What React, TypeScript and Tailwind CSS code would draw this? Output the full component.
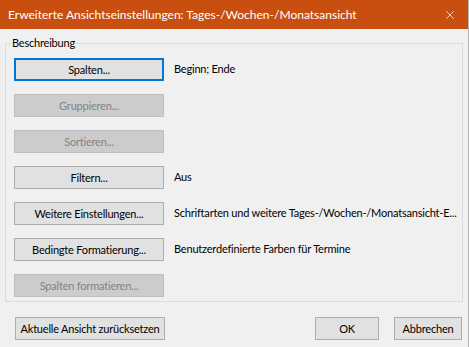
import { X } from "lucide-react";

type Row = {
  label: string;
  value?: string;
  disabled?: boolean;
  focused?: boolean;
};

const rows: Row[] = [
  { label: "Spalten...", value: "Beginn; Ende", focused: true },
  { label: "Gruppieren...", disabled: true },
  { label: "Sortieren...", disabled: true },
  { label: "Filtern...", value: "Aus" },
  { label: "Weitere Einstellungen...", value: "Schriftarten und weitere Tages-/Wochen-/Monatsansicht-E..." },
  { label: "Bedingte Formatierung...", value: "Benutzerdefinierte Farben für Termine" },
  { label: "Spalten formatieren...", disabled: true },
];

function DialogButton({ label, disabled, focused, className = "" }: { label: string; disabled?: boolean; focused?: boolean; className?: string }) {
  const look = disabled
    ? "border border-[#bfbfbf] bg-[#cccccc] text-[#838383]"
    : focused
      ? "border-2 border-[#0078d7] bg-[#e1e1e1] text-black"
      : "border border-[#adadad] bg-[#e1e1e1] text-black";

  return (
    <button
      type="button"
      disabled={disabled}
      className={`flex h-[23px] shrink-0 items-center justify-center whitespace-nowrap text-[11px] leading-none tracking-[-0.2px] ${look} ${className}`}
    >
      {label}
    </button>
  );
}

export default function App() {
  return (
    <div className="flex h-[347px] w-[469px] flex-col overflow-hidden border-r border-[#b4b4b4] bg-[#f0f0f0] font-['Lato',sans-serif] text-black">
      <div className="flex h-[29px] shrink-0 items-center justify-between bg-[#c84f0f] pl-[8px] pr-[11px] text-white">
        <span className="whitespace-nowrap text-[12px]">Erweiterte Ansichtseinstellungen: Tages-/Wochen-/Monatsansicht</span>
        <X size={14} strokeWidth={1.3} />
      </div>

      <fieldset className="mx-[5px] mt-[6px] border border-[#dcdcdc] p-0">
        <legend className="ml-[5px] px-[1px] text-[11px] leading-[16px] tracking-[-0.2px]">Beschreibung</legend>
        <div className="flex flex-col gap-[13px] pb-[4px] pl-[8px] pt-[7px]">
          {rows.map((row) => (
            <div key={row.label} className="flex items-center gap-[10px]">
              <DialogButton label={row.label} disabled={row.disabled} focused={row.focused} className="w-[150px]" />
              {row.value && <span className="whitespace-nowrap text-[11px] tracking-[-0.2px]">{row.value}</span>}
            </div>
          ))}
        </div>
      </fieldset>

      <div className="mt-[15px] flex items-center pl-[15px] pr-[6px]">
        <DialogButton label="Aktuelle Ansicht zurücksetzen" className="w-[150px]" />
        <div className="ml-auto flex gap-[15px]">
          <DialogButton label="OK" className="w-[64px]" />
          <DialogButton label="Abbrechen" className="w-[68px]" />
        </div>
      </div>
    </div>
  );
}
